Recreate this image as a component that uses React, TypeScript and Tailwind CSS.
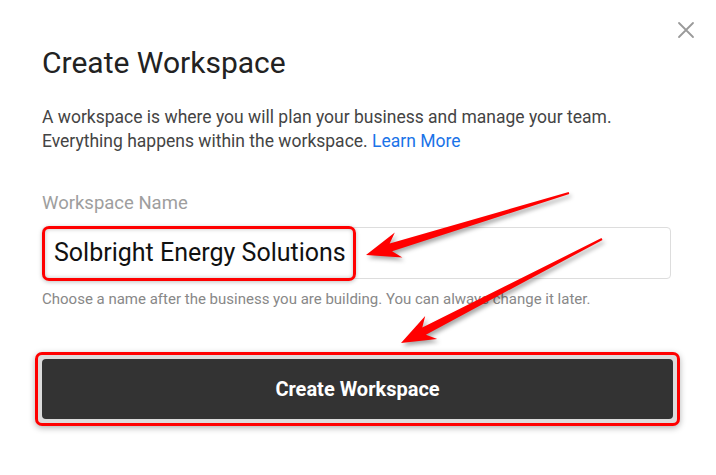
import React from "react";

function CloseIcon() {
    return (
        <svg width="18" height="18" viewBox="0 0 18 18" fill="none">
            <path d="M2 2L16 16M16 2L2 16" stroke="#9a9a9a" strokeWidth="1.8" strokeLinecap="round" />
        </svg>
    );
}

function Arrows() {
    return (
        <svg
            className="pointer-events-none absolute left-0 top-0 drop-shadow-[2px_3px_2px_rgba(0,0,0,0.35)]"
            width="716"
            height="475"
            viewBox="0 0 716 475"
        >
            <polygon
                fill="#ff0000"
                points="569.3,194 392.1,251.2 402.4,257.5 366,255 394.8,232.6 389.7,243.6 568.7,192"
            />
            <polygon
                fill="#ff0000"
                points="602.5,239.9 425.9,334.7 437.2,339 401,343 425.2,315.9 422.3,327.5 601.5,238.1"
            />
        </svg>
    );
}

export default function App() {
    return (
        <div className="relative h-[475px] w-[716px] overflow-hidden bg-white font-['Roboto',sans-serif]">
            <button className="absolute right-[21px] top-[21px]">
                <CloseIcon />
            </button>

            <div className="flex flex-col px-[42px] pt-[46px]">
                <h1 className="text-[30px] leading-[34px] text-[#222]">
                    Create Workspace
                </h1>

                <p className="mt-[25px] text-[17.5px] leading-[24px] text-[#444]">
                    A workspace is where you will plan your business and manage your team.
                    <br />
                    Everything happens within the workspace.{" "}
                    <a className="text-[#1a73e8]">Learn More</a>
                </p>

                <label className="mt-[38px] text-[18.5px] leading-[24px] text-[#9e9e9e]">
                    Workspace Name
                </label>

                <div className="relative mt-[12px] flex h-[52px] w-[629px] items-center rounded-[4px] border border-[#dddddd] px-[11px]">
                    <span className="text-[25px] text-[#111]">Solbright Energy Solutions</span>
                    <div className="absolute left-[-1px] top-[-2px] h-[55px] w-[314px] rounded-[7px] border-[3px] border-[#ff0000] shadow-[inset_0_0_4px_rgba(0,0,0,0.25),0_1px_4px_rgba(0,0,0,0.25)]" />
                </div>

                <p className="mt-[11px] text-[15px] leading-[18px] text-[#888]">
                    Choose a name after the business you are building. You can always change it later.
                </p>

                <div className="ml-[-7px] mt-[44px] w-[645px] rounded-[7px] border-[3px] border-[#ff0000] bg-[#dcdcdc] p-[4px] shadow-[0_2px_6px_rgba(0,0,0,0.3)]">
                    <button className="flex h-[60px] w-full items-center justify-center rounded-[4px] bg-[#333333] text-[20px] font-bold text-white">
                        Create Workspace
                    </button>
                </div>
            </div>

            <Arrows />
        </div>
    );
}
